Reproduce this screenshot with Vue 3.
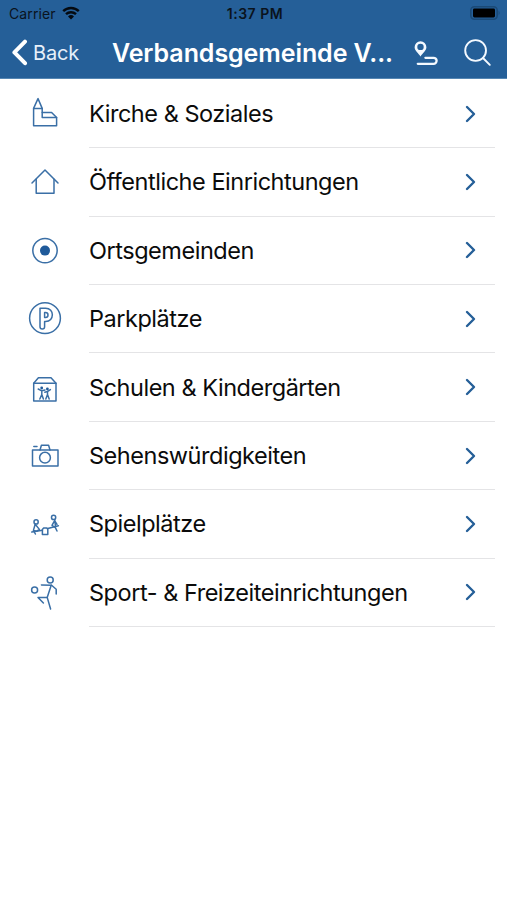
<template>
  <div class="screen">
    <header class="header">
      <div class="status-bar">
        <div class="carrier">
          <span class="carrier-name">Carrier</span>
          <svg class="wifi" viewBox="0 0 18 14" aria-hidden="true">
            <path d="M1.2 5.2 A11.2 11.2 0 0 1 16.8 5.2" />
            <path d="M4 8.2 A7.2 7.2 0 0 1 14 8.2" />
            <path class="wifi-dot" d="M9 13.4 L6 10.4 A4.4 4.4 0 0 1 12 10.4 Z" />
          </svg>
        </div>
        <span class="time">1:37 PM</span>
        <div class="battery-wrap">
          <svg class="battery" viewBox="0 0 31 14" aria-hidden="true">
            <rect class="battery-shell" x="0.8" y="0.8" width="26.4" height="12.4" rx="3.6" />
            <rect x="3" y="2.6" width="22" height="8.8" rx="1.4" />
            <path class="battery-tip" d="M28.6 4.8 Q30.6 7 28.6 9.2 Z" />
          </svg>
        </div>
      </div>
      <nav class="nav-bar">
        <button class="back" type="button">
          <svg class="back-icon" viewBox="0 0 17 28" aria-hidden="true">
            <path d="M14 2.6 L3.4 13.4 L14 24.2" />
          </svg>
          <span class="back-label">Back</span>
        </button>
        <h1 class="title">Verbandsgemeinde V...</h1>
        <button class="action route" type="button" aria-label="Route">
          <svg viewBox="0 0 26 28" aria-hidden="true">
            <path
              class="pin"
              d="M7.5 17.4 C5.6 14.4 1.6 11.6 1.6 8.2 A5.9 5.9 0 0 1 13.4 8.2 C13.4 11.6 9.4 14.4 7.5 17.4 Z M7.5 4.7 A3.2 3.2 0 0 0 7.5 11.1 A3.2 3.2 0 0 0 7.5 4.7 Z"
            />
            <path d="M12.4 18.8 H20.6 A2.9 2.9 0 0 1 20.6 24.8 H4.8" />
          </svg>
        </button>
        <button class="action search" type="button" aria-label="Search">
          <svg viewBox="0 0 28 28" aria-hidden="true">
            <circle cx="11.6" cy="11.5" r="10.4" />
            <path d="M19 19 L25.8 25.8" />
          </svg>
        </button>
      </nav>
    </header>

    <ul class="list">
      <li v-for="item in items" :key="item.label" class="row">
        <svg class="row-icon" viewBox="0 0 50 50" aria-hidden="true">
          <path v-for="d in item.paths" :key="d" :d="d" />
          <circle
            v-for="(c, i) in item.circles"
            :key="i"
            :cx="c.x"
            :cy="c.y"
            :r="c.r"
            :class="{ filled: c.filled }"
          />
        </svg>
        <div class="row-body">
          <span class="row-label">{{ item.label }}</span>
          <svg class="chevron" viewBox="0 0 12 18" aria-hidden="true">
            <path d="M2 2 L9 9 L2 16" />
          </svg>
        </div>
      </li>
    </ul>
  </div>
</template>

<script setup>
const items = [
  {
    label: 'Kirche & Soziales',
    paths: [
      'M18 9.6 L13.6 19.4 V36.7 H36.6 V28.6 L31.6 23.4 H22.2 V19.4 Z',
      'M13.6 19.4 H22.2',
      'M22.2 23.4 V28.4 H36.6',
    ],
  },
  {
    label: 'Öffentliche Einrichtungen',
    paths: ['M12 26 L25 13 L38 26', 'M16.2 22.2 V36.3 H34 V22.2'],
  },
  {
    label: 'Ortsgemeinden',
    circles: [
      { x: 25, y: 24.6, r: 12.2 },
      { x: 25, y: 24.6, r: 5, filled: true },
    ],
  },
  {
    label: 'Parkplätze',
    paths: [
      'M20 14.2 H25.6 C34.6 14.2 34.6 27.5 25.6 27.5 H24.6 V32.8 A2.3 2.3 0 0 1 20 32.8 Z',
      'M24.6 18.4 H25.6 C28.8 18.4 28.8 23.4 25.6 23.4 H24.6 Z',
    ],
    circles: [{ x: 25, y: 24.2, r: 15.4 }],
  },
  {
    label: 'Schulen & Kindergärten',
    paths: [
      'M13.7 38 V20.2 L18.4 14.8 H31 L36 20.2 V38 Z',
      'M13.7 20.2 H36',
      'M18.2 26 L21.8 27.8 L25 27 M21.8 27.8 V31.6 L19.8 36 M21.8 31.6 L23.4 36',
      'M24.8 29.2 L27.4 28.6 L30.4 26.6 M27.5 28.6 V31.6 L25.8 36 M27.5 31.6 L29.2 36',
    ],
    circles: [
      { x: 21.7, y: 25, r: 1.4, filled: true },
      { x: 27.4, y: 26, r: 1.4, filled: true },
    ],
  },
  {
    label: 'Sehenswürdigkeiten',
    paths: [
      'M12.5 19 H38 V35 H12.5 Z',
      'M20 19 L21.4 14.2 H28.6 L30 19',
      'M13.8 15.5 H17',
    ],
    circles: [{ x: 25, y: 26.7, r: 5.4 }],
  },
  {
    label: 'Spielplätze',
    paths: [
      'M11.8 33 L22.4 31.2 M27.8 29.6 L38.4 26.8',
      'M15.2 25.2 L13.4 31.4 L15.4 35 M15.2 25.2 L19.4 30.4 L16.8 32.2 L13.4 31.4',
      'M34.8 21 L35.4 26.6 M34.6 21.6 L32 26.4 L35.4 28.6 L37 32 M34.8 22 L37 25.4',
      'M22.4 30.4 L23.6 29 H26.8 L27.8 30.4 V35.4 H22.4 Z',
    ],
    circles: [
      { x: 16.1, y: 22.9, r: 2.1 },
      { x: 33.6, y: 18.4, r: 2.1 },
    ],
  },
  {
    label: 'Sport- & Freizeiteinrichtungen',
    paths: [
      'M21.4 16.9 L31.6 17.3 L36.2 21.2 V26',
      'M31.2 17.3 L27.2 29.4 H18 L23.4 35',
      'M27.2 29.4 L30.6 41',
    ],
    circles: [
      { x: 30.2, y: 12, r: 3 },
      { x: 14.6, y: 22, r: 3 },
    ],
  },
];
</script>

<style>
body {
  background: #fff;
}
</style>

<style scoped>
.screen {
  min-height: 900px;
  background: #fff;
  font-family: Inter, 'Liberation Sans', sans-serif;
  color: #0b0b0b;
}

svg {
  display: block;
  fill: none;
  stroke-linecap: round;
  stroke-linejoin: round;
}

.header {
  box-sizing: border-box;
  height: 79px;
  background: #255f98;
  border-bottom: 1px solid #5586b3;
}

/* Status bar */
.status-bar {
  display: grid;
  grid-template-columns: 1fr auto 1fr;
  align-items: center;
  height: 27px;
  padding: 0 6px 0 9px;
  color: #0a131d;
}

.carrier {
  display: flex;
  align-items: center;
  gap: 6px;
}

.carrier-name {
  font-size: 14px;
  letter-spacing: 0.1px;
}

.wifi {
  width: 18px;
  height: 14px;
  margin-top: -2px;
  stroke: #050a10;
  stroke-width: 2.4;
  stroke-linecap: butt;
}

.wifi-dot {
  fill: #050a10;
  stroke: none;
}

.time {
  font-size: 14px;
  font-weight: 600;
  letter-spacing: 0.5px;
}

.battery-wrap {
  display: flex;
  justify-content: flex-end;
}

.battery {
  width: 31px;
  height: 14px;
  margin-top: -1px;
  fill: #000;
}

.battery-shell {
  fill: none;
  stroke: #1b4a77;
  stroke-width: 1.6;
}

.battery-tip {
  fill: #1b4a77;
}

/* Navigation bar */
.nav-bar {
  display: flex;
  align-items: center;
  height: 51px;
  padding: 0 15px 0 11px;
  color: #fff;
}

.back,
.action {
  display: flex;
  align-items: center;
  padding: 0;
  border: 0;
  background: none;
  color: inherit;
  font-family: inherit;
}

.back {
  width: 101px;
  gap: 5px;
}

.back-icon {
  width: 17px;
  height: 28px;
  stroke: #fff;
  stroke-width: 4;
}

.back-label {
  font-size: 20px;
  letter-spacing: -0.2px;
  color: #e6f0fa;
}

.title {
  flex: 1;
  margin: 0;
  font-size: 25px;
  font-weight: 600;
  letter-spacing: -0.08px;
  line-height: 32px;
  white-space: nowrap;
}

.action svg {
  stroke: #f4f9ff;
}

.route {
  margin-right: 25px;
}

.route svg {
  width: 26px;
  height: 28px;
  stroke-width: 2.3;
}

.action .pin {
  fill: #f4f9ff;
  fill-rule: evenodd;
  stroke: none;
}

.search svg {
  width: 28px;
  height: 28px;
  stroke-width: 1.9;
}

/* Category list */
.list {
  margin: 0;
  padding: 0.8px 0 0;
  list-style: none;
}

.row {
  display: flex;
  align-items: center;
  height: 68.42px;
  padding: 0 12px 0 20px;
}

.row-icon {
  width: 50px;
  height: 50px;
  margin-right: 19px;
  stroke: #3a6fa6;
  stroke-width: 1.5;
}

.filled {
  fill: #1f5a9a;
  stroke: none;
}

.row-body {
  box-sizing: border-box;
  display: flex;
  flex: 1;
  align-items: center;
  justify-content: space-between;
  height: 100%;
  padding-right: 18.5px;
  border-bottom: 1px solid #e4e4e6;
}

.row-label {
  font-size: 23.5px;
  letter-spacing: -0.47px;
  white-space: nowrap;
}

.chevron {
  width: 12px;
  height: 18px;
  stroke: #255f98;
  stroke-width: 2.4;
}
</style>
